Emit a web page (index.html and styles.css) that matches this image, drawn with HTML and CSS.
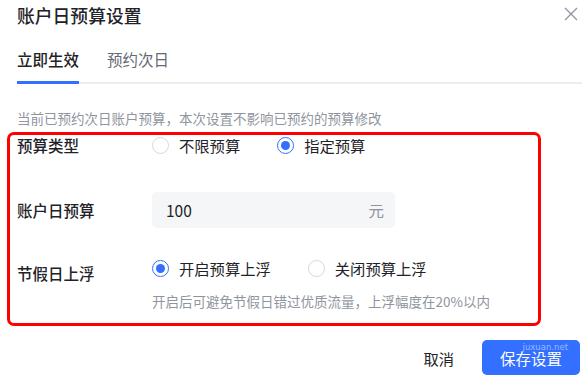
FILE: index.html
```html
<!DOCTYPE html>
<html lang="zh-CN">
<head>
    <meta charset="UTF-8">
    <title>账户日预算设置</title>
    <link rel="stylesheet" href="styles.css">
</head>
<body>
    <div class="dialog">
        <div class="dialog-header">
            <h1 class="dialog-title">账户日预算设置</h1>
            <svg class="close-icon" width="16" height="16" viewBox="0 0 16 16">
                <path d="M2 2 L14 14 M14 2 L2 14" stroke="#8f959e" stroke-width="1.3" fill="none"/>
            </svg>
        </div>

        <div class="tabs">
            <div class="tab active">立即生效</div>
            <div class="tab">预约次日</div>
        </div>

        <p class="notice">当前已预约次日账户预算，本次设置不影响已预约的预算修改</p>

        <div class="form-box">
            <div class="form-row row-type">
                <div class="form-label">预算类型</div>
                <div class="radio-group">
                    <label class="radio"><span class="radio-dot"></span>不限预算</label>
                    <label class="radio checked"><span class="radio-dot"></span>指定预算</label>
                </div>
            </div>

            <div class="form-row row-amount">
                <div class="form-label">账户日预算</div>
                <div class="input-box">
                    <span class="input-value">100</span>
                    <span class="input-unit">元</span>
                </div>
            </div>

            <div class="form-row row-holiday">
                <div class="form-label">节假日上浮</div>
                <div class="field">
                    <div class="radio-group">
                        <label class="radio checked"><span class="radio-dot"></span>开启预算上浮</label>
                        <label class="radio"><span class="radio-dot"></span>关闭预算上浮</label>
                    </div>
                    <div class="hint">开启后可避免节假日错过优质流量，上浮幅度在20%以内</div>
                </div>
            </div>
        </div>

        <div class="dialog-footer">
            <button class="btn-cancel">取消</button>
            <button class="btn-primary">保存设置<span class="watermark">juxuan.net</span></button>
        </div>
    </div>
</body>
</html>
```

FILE: styles.css
```css
body, html {
    margin: 0;
    padding: 0;
    background: #fff;
    font-family: "Noto Sans CJK SC", "Noto Sans", sans-serif;
    color: #1f2329;
}

.dialog {
    padding: 0 6px 0 17px;
}

.dialog-header {
    display: flex;
    justify-content: space-between;
    align-items: center;
    height: 30px;
}

.dialog-title {
    margin: 0;
    font-size: 17.8px;
    font-weight: 500;
    line-height: 30px;
}

.close-icon {
    margin-right: 3px;
    margin-top: -2px;
}

/* Tabs */
.tabs {
    display: flex;
    gap: 28px;
    margin-top: 18px;
    border-bottom: 2px solid #ebedf0;
}

.tab {
    font-size: 15.5px;
    line-height: 22px;
    color: #646a73;
    padding-bottom: 11px;
    border-bottom: 3px solid transparent;
    margin-bottom: -2px;
}

.tab.active {
    color: #1f2329;
    font-weight: 500;
    border-bottom-color: #3370ff;
}

.notice {
    margin: 24px 0 0;
    font-size: 13.5px;
    line-height: 20px;
    color: #8f959e;
}

/* Form */
.form-box {
    box-sizing: border-box;
    width: 534px;
    margin: 4px 0 0 -10px;
    padding: 0 7px 12px;
    border: 3px solid #ff0000;
    border-radius: 7px;
}

.form-row {
    display: flex;
    align-items: flex-start;
}

.form-label {
    width: 135px;
    flex-shrink: 0;
    font-size: 15.5px;
    line-height: 26px;
    font-weight: 500;
}

.row-type {
    margin-top: -3px;
}

.row-amount {
    margin-top: 34px;
    align-items: center;
}

.row-holiday {
    margin-top: 27px;
}

.row-holiday .form-label {
    padding-top: 5px;
}

.radio-group {
    display: flex;
    gap: 37px;
}

.radio {
    display: flex;
    align-items: center;
    gap: 10px;
    font-size: 15.3px;
    line-height: 26px;
}

.radio-dot {
    box-sizing: border-box;
    width: 17px;
    height: 17px;
    border-radius: 50%;
    border: 1px solid #d5d8dc;
    background: #fff;
    position: relative;
}

.radio.checked .radio-dot {
    border-color: #3370ff;
}

.radio.checked .radio-dot::after {
    content: "";
    position: absolute;
    top: 3px;
    left: 3px;
    width: 9px;
    height: 9px;
    border-radius: 50%;
    background: #3370ff;
}

.input-box {
    box-sizing: border-box;
    width: 243px;
    height: 36px;
    display: flex;
    align-items: center;
    justify-content: space-between;
    padding: 0 11px 0 14px;
    background: #f5f6f7;
    border-radius: 5px;
    font-size: 15.5px;
}

.input-unit {
    color: #8f959e;
}

.hint {
    margin-top: 10px;
    font-size: 13.5px;
    line-height: 20px;
    color: #8f959e;
}

/* Footer */
.dialog-footer {
    display: flex;
    justify-content: flex-end;
    align-items: center;
    margin-top: 14px;
    padding-right: 2px;
}

.btn-cancel {
    border: none;
    background: none;
    padding: 0;
    margin-right: 28px;
    font-family: inherit;
    font-size: 15.3px;
    color: #1f2329;
}

.btn-primary {
    position: relative;
    height: 35px;
    padding: 0 18px;
    border: none;
    border-radius: 5px;
    background: #3370ff;
    color: #fff;
    font-family: inherit;
    font-size: 15.5px;
}

.watermark {
    position: absolute;
    top: 2px;
    right: 12px;
    font-family: "DejaVu Sans", sans-serif;
    font-size: 8.5px;
    color: rgba(255, 255, 255, 0.5);
}
```
